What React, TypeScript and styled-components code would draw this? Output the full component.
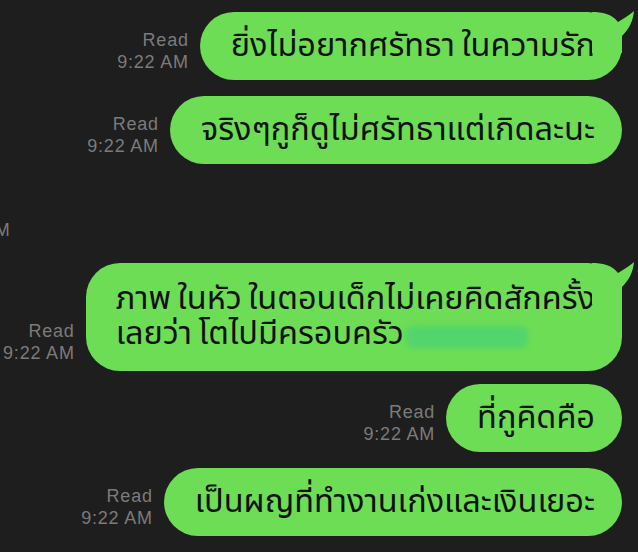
import styled, { createGlobalStyle } from 'styled-components';

const GlobalStyle = createGlobalStyle`
  html, body {
    margin: 0;
    padding: 0;
    background: #1e1e1e;
    overflow: hidden;
  }
`;

const Screen = styled.div`
  width: 638px;
  height: 552px;
  background: #1e1e1e;
  display: flex;
  flex-direction: column;
  padding: 12px 16px 0 0;
  box-sizing: border-box;
  overflow: hidden;
  font-family: 'Noto Sans Thai', 'Noto Sans', sans-serif;
`;

const Row = styled.div<{ $top?: number; $side?: 'left' | 'right' }>`
  display: flex;
  justify-content: ${(p) => (p.$side === 'left' ? 'flex-start' : 'flex-end')};
  align-items: flex-end;
  gap: 11px;
  margin-top: ${(p) => p.$top ?? 0}px;
`;

const Meta = styled.div`
  font-family: 'Liberation Sans', Arial, sans-serif;
  font-size: 18px;
  line-height: 22px;
  letter-spacing: 0.8px;
  color: #7b7b7b;
  text-align: right;
  padding-bottom: 7px;
  white-space: nowrap;
`;

const StrayTime = styled(Meta)`
  margin-left: -61px;
  padding-bottom: 0;
`;

const Bubble = styled.div<{ $lines?: number }>`
  position: relative;
  background: #6cdd55;
  color: #111;
  border-radius: 34px;
  padding: ${(p) => (p.$lines && p.$lines > 1 ? '19px 27px 19px 30px' : '16.5px 27px 16.5px 31px')};
  font-size: 32.5px;
  line-height: 35px;
  word-spacing: -2px;
  white-space: nowrap;
`;

const Tail = styled.svg`
  position: absolute;
  left: calc(100% - 30px);
  top: -3px;
  width: 44px;
  height: 44px;
`;

const Hidden = styled.span`
  display: inline-block;
  width: 122px;
  height: 22px;
  margin-left: 2px;
  vertical-align: -4px;
  background: #52d56d;
  border-radius: 8px;
  filter: blur(2.5px);
`;

const BubbleTail = () => (
  <Tail viewBox="0 0 44 44">
    <path
      d="M0 3 C10 3 20 5 26 13 C32 9 38 6 42 2 C41 12 37 20 30 27 V44 H0 Z"
      fill="#6cdd55"
    />
  </Tail>
);

const ReadMeta = () => (
  <Meta>
    Read
    <br />
    9:22 AM
  </Meta>
);

export default function App() {
  return (
    <>
      <GlobalStyle />
      <Screen>
        <Row>
          <ReadMeta />
          <Bubble>
            ยิ่งไม่อยากศรัทธา ในความรัก
            <BubbleTail />
          </Bubble>
        </Row>
        <Row $top={16}>
          <ReadMeta />
          <Bubble>จริงๆกูก็ดูไม่ศรัทธาแต่เกิดละนะ</Bubble>
        </Row>
        <Row $top={55} $side="left">
          <StrayTime>9:22 AM</StrayTime>
        </Row>
        <Row $top={22}>
          <ReadMeta />
          <Bubble $lines={2}>
            ภาพ ในหัว ในตอนเด็กไม่เคยคิดสักครั้ง
            <br />
            เลยว่า โตไปมีครอบครัว
            <Hidden />
            <BubbleTail />
          </Bubble>
        </Row>
        <Row $top={13}>
          <ReadMeta />
          <Bubble>ที่กูคิดคือ</Bubble>
        </Row>
        <Row $top={16}>
          <ReadMeta />
          <Bubble>เป็นผญที่ทำงานเก่งและเงินเยอะ</Bubble>
        </Row>
      </Screen>
    </>
  );
}
